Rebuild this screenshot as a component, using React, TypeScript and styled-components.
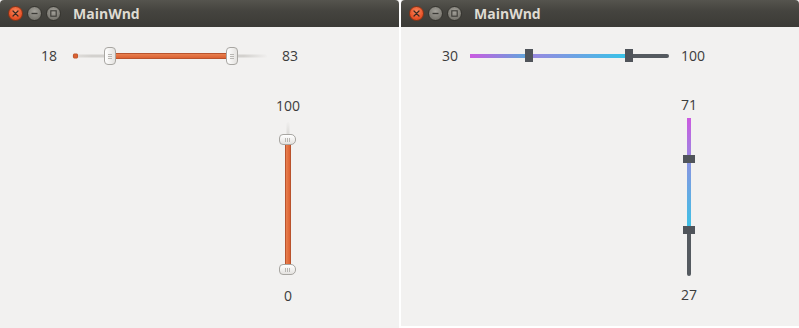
import styled, { createGlobalStyle } from 'styled-components';

const GlobalStyle = createGlobalStyle`
  html, body {
    margin: 0;
    padding: 0;
    background: #ffffff;
  }
  body {
    font-family: 'Open Sans', 'DejaVu Sans', sans-serif;
  }
`;

type Skin = 'ambiance' | 'gradient';

interface SliderSpec {
  skin: Skin;
  length: number;
  lo: number;
  hi: number;
  before?: string;
  between?: string;
}

const Screen = styled.div`
  display: flex;
  gap: 2px;
  width: 799px;
  height: 328px;
  background: #ffffff;
  overflow: hidden;
`;

const Window = styled.div<{ $width: number; $height: number }>`
  width: ${(p) => p.$width}px;
  height: ${(p) => p.$height}px;
  flex: none;
  display: flex;
  flex-direction: column;
  background: #f2f1f0;
`;

const TitleBar = styled.div`
  height: 27px;
  flex: none;
  display: flex;
  align-items: center;
  padding-left: 8px;
  background: linear-gradient(#55544e, #45443f 40%, #3b3a36);
  border-radius: 4px 4px 0 0;
`;

const WinButtons = styled.div`
  display: flex;
  gap: 4px;
`;

const WinButton = styled.div<{ $close?: boolean }>`
  width: 15px;
  height: 15px;
  border-radius: 50%;
  box-sizing: border-box;
  display: flex;
  align-items: center;
  justify-content: center;
  border: 1px solid ${(p) => (p.$close ? '#8a3416' : '#35342f')};
  background: ${(p) =>
    p.$close
      ? 'radial-gradient(circle at 50% 35%, #f78a5f, #e9542a 60%, #cf4318)'
      : 'radial-gradient(circle at 50% 35%, #a3a19a, #7f7d76 60%, #6c6a64)'};
`;

const Title = styled.span`
  margin-left: 12px;
  font-family: 'Open Sans', 'DejaVu Sans', sans-serif;
  font-weight: 700;
  font-size: 14px;
  color: #dfdbd2;
`;

const Body = styled.div`
  flex: 1;
  display: flex;
  flex-direction: column;
`;

const HRow = styled.div<{ $gap: number }>`
  margin-top: 19px;
  height: 20px;
  display: flex;
  align-items: center;
  gap: ${(p) => p.$gap}px;
`;

const Value = styled.span<{ $right?: boolean }>`
  font-size: 14px;
  line-height: 18px;
  height: 18px;
  color: #3c3c3c;
  width: ${(p) => (p.$right ? 'auto' : '57px')};
  text-align: ${(p) => (p.$right ? 'left' : 'right')};
`;

const VCol = styled.div<{ $top: number; $gapTop: number; $gapBottom: number }>`
  margin-top: ${(p) => p.$top}px;
  margin-left: 268px;
  width: 40px;
  display: flex;
  flex-direction: column;
  align-items: center;

  & > :first-child {
    margin-bottom: ${(p) => p.$gapTop}px;
  }
  & > :last-child {
    margin-top: ${(p) => p.$gapBottom}px;
  }
`;

const VValue = styled.span`
  font-size: 14px;
  line-height: 18px;
  height: 18px;
  color: #3c3c3c;
  text-align: center;
`;

const Track = styled.div<{ $vertical?: boolean; $length: number }>`
  position: relative;
  flex: none;
  width: ${(p) => (p.$vertical ? '20px' : `${p.$length}px`)};
  height: ${(p) => (p.$vertical ? `${p.$length}px` : '20px')};
`;

const Groove = styled.div<{ $vertical?: boolean; $skin: Skin }>`
  position: absolute;
  ${(p) =>
    p.$vertical
      ? `left: 50%; top: 0; bottom: 0; width: ${p.$skin === 'gradient' ? 4 : 3}px; transform: translateX(-50%);`
      : `top: 50%; left: 0; right: 0; height: ${p.$skin === 'gradient' ? 4 : 3}px; transform: translateY(-50%);`}
  background: ${(p) =>
    p.$skin === 'gradient'
      ? '#555a60'
      : p.$vertical
        ? 'linear-gradient(to bottom, #f0efee, #d3d1ce 12%, #d3d1ce 88%, #f0efee)'
        : 'linear-gradient(to right, #e3e1de, #d3d1ce 10%, #d3d1ce 88%, #f0efee)'};
  border-radius: 2px;
`;

const Segment = styled.div<{ $vertical?: boolean; $skin: Skin }>`
  position: absolute;
  box-sizing: border-box;
  ${(p) =>
    p.$vertical
      ? `left: 50%; width: ${p.$skin === 'gradient' ? 4 : 6}px; transform: translateX(-50%);`
      : `top: 50%; height: ${p.$skin === 'gradient' ? 4 : 6}px; transform: translateY(-50%);`}
  ${(p) =>
    p.$skin === 'ambiance' &&
    `
    background: linear-gradient(${p.$vertical ? 'to right' : 'to bottom'}, #e8804f, #dc6132);
    border: 1px solid #b9532d;
    border-radius: 1px;
  `}
`;

const StartDot = styled.div`
  position: absolute;
  top: 50%;
  left: 1px;
  width: 3px;
  height: 3px;
  transform: translateY(-50%);
  background: #dc6132;
  border: 1px solid #c0582f;
  border-radius: 1px;
`;

const Handle = styled.div<{ $vertical?: boolean; $skin: Skin }>`
  position: absolute;
  box-sizing: border-box;
  display: flex;
  align-items: center;
  justify-content: center;
  gap: 1px;
  flex-direction: ${(p) => (p.$vertical ? 'row' : 'column')};
  ${(p) =>
    p.$skin === 'gradient'
      ? p.$vertical
        ? 'width: 12px; height: 8px; left: 4px; background: #50545a;'
        : 'width: 8px; height: 13px; top: 3px; background: #50545a;'
      : p.$vertical
        ? `width: 17px; height: 11px; left: 1px;
           border: 1px solid #a8a6a2; border-radius: 4px 5px 5px 4px;
           background: linear-gradient(#ffffff, #e4e2df);`
        : `width: 12px; height: 18px; top: 1px;
           border: 1px solid #a8a6a2; border-radius: 4px;
           background: linear-gradient(to right, #ffffff, #e4e2df);`}
`;

const Grip = styled.i<{ $vertical?: boolean }>`
  display: block;
  background: #b9b7b3;
  ${(p) => (p.$vertical ? 'width: 1px; height: 4px;' : 'width: 4px; height: 1px;')}
`;

function CloseGlyph() {
  return (
    <svg width="7" height="7" viewBox="0 0 7 7">
      <path d="M1 1 L6 6 M6 1 L1 6" stroke="#3a2a22" strokeWidth="1.2" strokeLinecap="round" />
    </svg>
  );
}

function MinGlyph() {
  return (
    <svg width="7" height="7" viewBox="0 0 7 7">
      <path d="M0.5 3.5 H6.5" stroke="#3c3b37" strokeWidth="1.3" />
    </svg>
  );
}

function MaxGlyph() {
  return (
    <svg width="7" height="7" viewBox="0 0 7 7">
      <rect x="0.8" y="0.8" width="5.4" height="5.4" fill="none" stroke="#3c3b37" strokeWidth="1.1" />
    </svg>
  );
}

function RangeSlider({ spec, vertical }: { spec: SliderSpec; vertical?: boolean }) {
  const { skin, length, lo, hi, before, between } = spec;
  const a = lo * length;
  const b = hi * length;
  const hSize = skin === 'gradient' ? 8 : vertical ? 11 : 12;
  const axis = vertical ? 'top' : 'left';
  const span = vertical ? 'height' : 'width';
  const dir = vertical ? 'to bottom' : 'to right';

  return (
    <Track $vertical={vertical} $length={length}>
      <Groove $vertical={vertical} $skin={skin} />
      {skin === 'gradient' && before && (
        <Segment
          $vertical={vertical}
          $skin={skin}
          style={{ [axis]: 0, [span]: a, background: `linear-gradient(${dir}, ${before})` }}
        />
      )}
      {skin === 'ambiance' && !vertical && <StartDot />}
      <Segment
        $vertical={vertical}
        $skin={skin}
        style={{
          [axis]: a,
          [span]: b - a,
          ...(skin === 'gradient' ? { background: `linear-gradient(${dir}, ${between})` } : {}),
        }}
      />
      {[a, b].map((pos, i) => (
        <Handle key={i} $vertical={vertical} $skin={skin} style={{ [axis]: Math.round(pos - hSize / 2) }}>
          {skin === 'ambiance' &&
            [0, 1, 2].map((g) => <Grip key={g} $vertical={vertical} />)}
        </Handle>
      ))}
    </Track>
  );
}

interface PanelSpec {
  width: number;
  height: number;
  rowGap: number;
  horizontal: SliderSpec;
  hLabels: [string, string];
  vertical: SliderSpec;
  vLabels: [string, string];
  vTop: number;
  vGapTop: number;
  vGapBottom: number;
}

const panels: PanelSpec[] = [
  {
    width: 399,
    height: 328,
    rowGap: 15,
    horizontal: { skin: 'ambiance', length: 195, lo: 0.197, hi: 0.818 },
    hLabels: ['18', '83'],
    vertical: { skin: 'ambiance', length: 153, lo: 0.114, hi: 0.967 },
    vLabels: ['100', '0'],
    vTop: 31,
    vGapTop: 7,
    vGapBottom: 12,
  },
  {
    width: 398,
    height: 326,
    rowGap: 12,
    horizontal: {
      skin: 'gradient',
      length: 199,
      lo: 0.294,
      hi: 0.8,
      before: '#cb5ae0, #5aa9dc',
      between: '#9c86e0, #34c5e8',
    },
    hLabels: ['30', '100'],
    vertical: {
      skin: 'gradient',
      length: 158,
      lo: 0.26,
      hi: 0.709,
      before: '#cb5ae0, #9a88e0',
      between: '#8d92e0, #3bc3e6',
    },
    vLabels: ['71', '27'],
    vTop: 30,
    vGapTop: 4,
    vGapBottom: 10,
  },
];

export default function App() {
  return (
    <>
      <GlobalStyle />
      <Screen>
        {panels.map((p, i) => (
          <Window key={i} $width={p.width} $height={p.height}>
            <TitleBar>
              <WinButtons>
                <WinButton $close>
                  <CloseGlyph />
                </WinButton>
                <WinButton>
                  <MinGlyph />
                </WinButton>
                <WinButton>
                  <MaxGlyph />
                </WinButton>
              </WinButtons>
              <Title>MainWnd</Title>
            </TitleBar>
            <Body>
              <HRow $gap={p.rowGap}>
                <Value>{p.hLabels[0]}</Value>
                <RangeSlider spec={p.horizontal} />
                <Value $right>{p.hLabels[1]}</Value>
              </HRow>
              <VCol $top={p.vTop} $gapTop={p.vGapTop} $gapBottom={p.vGapBottom}>
                <VValue>{p.vLabels[0]}</VValue>
                <RangeSlider spec={p.vertical} vertical />
                <VValue>{p.vLabels[1]}</VValue>
              </VCol>
            </Body>
          </Window>
        ))}
      </Screen>
    </>
  );
}
